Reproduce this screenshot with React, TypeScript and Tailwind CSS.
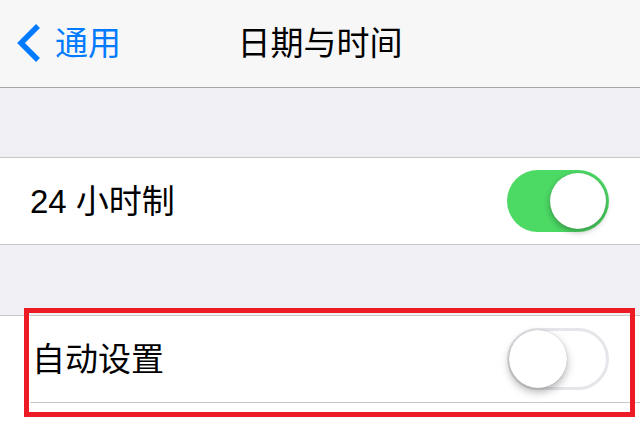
import React from 'react';

const font = { fontFamily: '"Liberation Sans", "Noto Sans CJK SC", sans-serif' };

function Toggle({ on }: { on: boolean }) {
  if (on) {
    return (
      <div className="relative w-[102px] h-[62px] rounded-full bg-[#4cd964] shrink-0">
        <div className="absolute right-[3px] top-[3px] w-[56px] h-[56px] rounded-full bg-white shadow-[0_3px_6px_rgba(0,0,0,0.3),0_0_1px_rgba(0,0,0,0.2)]" />
      </div>
    );
  }
  return (
    <div className="relative w-[102px] h-[62px] rounded-full border-[3px] border-[#e5e5ea] bg-white shrink-0">
      <div className="absolute left-[-1px] top-[-1px] w-[58px] h-[58px] rounded-full bg-white shadow-[0_4px_8px_rgba(0,0,0,0.3),0_0_1px_rgba(0,0,0,0.3)]" />
    </div>
  );
}

export default function App() {
  return (
    <div className="relative w-[640px] h-[431px] overflow-hidden bg-white" style={font}>
      {/* 导航栏 */}
      <div className="relative h-[88px] bg-[#f7f7f7] border-b border-[#a7a7aa] flex items-center justify-center">
        <div className="absolute left-[14px] top-0 h-full flex items-center gap-[11px]">
          <svg width="30" height="40" viewBox="0 0 30 40" className="mt-[-1px]">
            <polyline points="24,3 7,20 24,37" fill="none" stroke="#007aff" strokeWidth="5.5" strokeLinecap="butt" strokeLinejoin="miter" />
          </svg>
          <span className="text-[33px] text-[#007aff] leading-none">通用</span>
        </div>
        <span className="text-[33px] text-black leading-none">日期与时间</span>
      </div>

      <div className="h-[69px] bg-[#efeff4]" />

      <div className="h-[88px] bg-white border-y border-[#c8c7cc] flex items-center justify-between pl-[30px] pr-[31px]">
        <span className="text-[33px] text-black leading-none">24 小时制</span>
        <Toggle on />
      </div>

      <div className="h-[70px] bg-[#efeff4]" />

      <div className="bg-white border-t border-[#c8c7cc]">
        <div className="h-[86px] flex items-center justify-between pl-[32px] pr-[31px]">
          <span className="text-[33px] text-black leading-none">自动设置</span>
          <Toggle on={false} />
        </div>
        <div className="ml-[30px] h-px bg-[#c8c7cc]" />
      </div>

      {/* 红框标注 */}
      <div className="absolute left-[24px] top-[308px] w-[611px] h-[109px] border-[5px] border-[#ed1c24] pointer-events-none" />
    </div>
  );
}
